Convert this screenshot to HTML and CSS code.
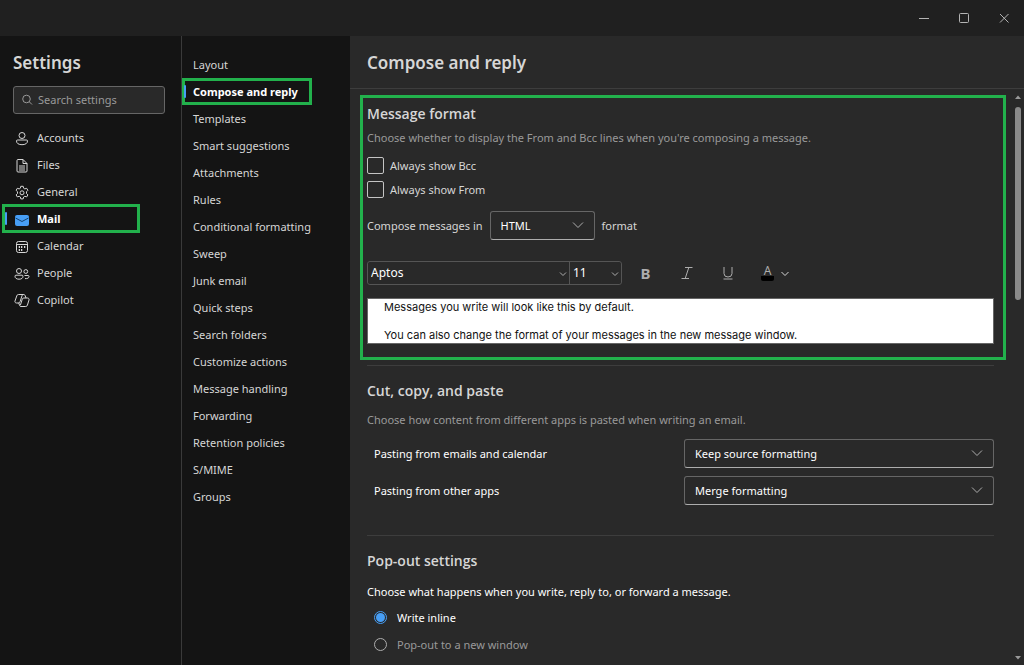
FILE: index.html
```html
<!DOCTYPE html>
<html lang="en">
<head>
  <meta charset="UTF-8">
  <meta name="viewport" content="width=device-width, initial-scale=1.0">
  <title>Settings</title>
  <link rel="stylesheet" href="styles.css">
</head>
<body>
  <header class="titlebar">
    <button type="button" aria-label="Minimize"><svg width="12" height="12" viewBox="0 0 12 12"><path d="M1 6.500h10"/></svg></button>
    <button type="button" aria-label="Maximize"><svg width="12" height="12" viewBox="0 0 12 12"><rect x="1.500" y="1.500" width="9" height="9" rx="1"/></svg></button>
    <button type="button" aria-label="Close"><svg width="12" height="12" viewBox="0 0 12 12"><path d="M2 2l8.500 8.500M10.500 2L2 10.500"/></svg></button>
  </header>

  <div class="window">
    <aside class="sidebar">
      <h1>Settings</h1>
      <div class="search">
        <svg width="12" height="12" viewBox="0 0 12 12"><circle cx="5.500" cy="5" r="3.800"/><path d="M8.300 7.800l2.700 2.700"/></svg>
        <input type="text" placeholder="Search settings" aria-label="Search settings">
      </div>
      <nav class="menu">
        <a href="#">
          <svg width="16" height="16" viewBox="0 0 16 16"><circle cx="8" cy="5.500" r="3"/><path d="M3.500 10h9a1 1 0 0 1 1 1c0 2.500-2.300 3.700-5.500 3.700s-5.500-1.200-5.500-3.700a1 1 0 0 1 1-1z"/></svg>
          Accounts
        </a>
        <a href="#">
          <svg width="16" height="16" viewBox="0 0 16 16"><path d="M3 3.500a1 1 0 0 1 1-1h5l4 4v7.500a1 1 0 0 1-1 1H4a1 1 0 0 1-1-1zM9 2.500v4h4M5 9h6M5 11h6M5 13h6"/></svg>
          Files
        </a>
        <a href="#">
          <svg width="16" height="16" viewBox="0 0 16 16"><circle cx="8" cy="8.800" r="2"/><path d="M6.800 2.300h2.400l.4 1.900 1.200.7 1.900-.6 1.200 2-1.400 1.400v1.800l1.400 1.400-1.200 2-1.900-.6-1.200.7-.4 1.900H6.800l-.4-1.900-1.200-.7-1.900.6-1.200-2 1.400-1.400V7.700L2.100 6.300l1.200-2 1.900.6 1.200-.7z"/></svg>
          General
        </a>
        <a href="#" class="active">
          <svg class="mail" width="16" height="16" viewBox="0 0 16 16"><rect x="1" y="4" width="14" height="11" rx="2"/><path d="M1.500 7L8 10.500 14.500 7"/></svg>
          Mail
        </a>
        <a href="#">
          <svg width="16" height="16" viewBox="0 0 16 16"><rect x="2.500" y="3.500" width="11" height="11" rx="2"/><path d="M2.500 6.500h11"/><path class="dots" d="M7 9h1.300M10 9h1.300M4.700 12H6M7 12h1.300M4.700 9H6"/></svg>
          Calendar
        </a>
        <a href="#">
          <svg width="16" height="16" viewBox="0 0 16 16"><circle cx="5" cy="6" r="2.500"/><circle cx="11.800" cy="6.500" r="1.900"/><path d="M2 10.200h6a1 1 0 0 1 1 1c0 1.900-1.500 3-4 3s-4-1.100-4-3a1 1 0 0 1 1-1zM10.500 10.500h3.500a1 1 0 0 1 1 1c0 1.500-1.500 2.300-4 2.100"/></svg>
          People
        </a>
        <a href="#">
          <svg width="16" height="16" viewBox="0 0 16 16"><path d="M4.500 2.500h5.200a1.500 1.500 0 0 1 1.400 1L12 6h1.500a1.500 1.500 0 0 1 1.500 2l-1.600 5.200a1.800 1.800 0 0 1-1.700 1.300H7a1.500 1.500 0 0 1-1.400-1L4.800 11H2.500A1.500 1.500 0 0 1 1 9l1.800-5.200a1.800 1.800 0 0 1 1.700-1.300z"/><path d="M9.500 2.500a1.500 1.500 0 0 0-1.400 1L6 9.800a1.700 1.700 0 0 1-1.600 1.200M12 6H9.800a1.500 1.500 0 0 0-1.500 1.100l-1.900 6"/></svg>
          Copilot
        </a>
      </nav>
    </aside>

    <nav class="submenu">
      <a href="#">Layout</a>
      <a href="#" class="active">Compose and reply</a>
      <a href="#">Templates</a>
      <a href="#">Smart suggestions</a>
      <a href="#">Attachments</a>
      <a href="#">Rules</a>
      <a href="#">Conditional formatting</a>
      <a href="#">Sweep</a>
      <a href="#">Junk email</a>
      <a href="#">Quick steps</a>
      <a href="#">Search folders</a>
      <a href="#">Customize actions</a>
      <a href="#">Message handling</a>
      <a href="#">Forwarding</a>
      <a href="#">Retention policies</a>
      <a href="#">S/MIME</a>
      <a href="#">Groups</a>
    </nav>

    <main class="content">
      <h2>Compose and reply</h2>
      <div class="scroll-area">
        <div class="sections">
          <section class="message-format">
            <h3>Message format</h3>
            <p class="hint">Choose whether to display the From and Bcc lines when you're composing a message.</p>
            <div class="checks">
              <label><input type="checkbox" name="bcc"> Always show Bcc</label>
              <label><input type="checkbox" name="from"> Always show From</label>
            </div>
            <div class="compose-in">
              <label for="format">Compose messages in</label>
              <div class="select">
                <select id="format"><option>HTML</option><option>Plain text</option></select>
                <svg width="12" height="12" viewBox="0 0 12 12"><path d="M1 3.500l5 5 5-5"/></svg>
              </div>
              <span>format</span>
            </div>
            <div class="toolbar">
              <div class="font-picker">
                <div class="select font-name">
                  <select aria-label="Font"><option>Aptos</option></select>
                  <svg width="8" height="8" viewBox="0 0 8 8"><path d="M1 2.500l3 3 3-3"/></svg>
                </div>
                <div class="select font-size">
                  <select aria-label="Font size"><option>11</option><option>12</option></select>
                  <svg width="8" height="8" viewBox="0 0 8 8"><path d="M1 2.500l3 3 3-3"/></svg>
                </div>
              </div>
              <button type="button" class="bold" aria-label="Bold">B</button>
              <button type="button" aria-label="Italic"><svg width="12" height="14" viewBox="0 0 12 14"><path d="M4 1.500h7.500M.5 12.500H8M7.800 1.500l-3.600 11"/></svg></button>
              <button type="button" aria-label="Underline"><svg width="12" height="14" viewBox="0 0 12 14"><path d="M2 1v6.500a4 3.500 0 0 0 8 0V1M1.500 13h9"/></svg></button>
              <button type="button" class="color" aria-label="Font color">
                <span class="swatch">A</span>
                <svg width="8" height="8" viewBox="0 0 8 8"><path d="M.5 3L4 6.500 7.500 3"/></svg>
              </button>
            </div>
            <div class="preview">
              <p>Messages you write will look like this by default.</p>
              <p>You can also change the format of your messages in the new message window.</p>
            </div>
          </section>

          <section class="paste">
            <h3>Cut, copy, and paste</h3>
            <p class="hint">Choose how content from different apps is pasted when writing an email.</p>
            <div class="row">
              <label for="pasteMail">Pasting from emails and calendar</label>
              <div class="select">
                <select id="pasteMail"><option>Keep source formatting</option></select>
                <svg width="12" height="12" viewBox="0 0 12 12"><path d="M1 3.500l5 5 5-5"/></svg>
              </div>
            </div>
            <div class="row">
              <label for="pasteApps">Pasting from other apps</label>
              <div class="select">
                <select id="pasteApps"><option>Merge formatting</option></select>
                <svg width="12" height="12" viewBox="0 0 12 12"><path d="M1 3.500l5 5 5-5"/></svg>
              </div>
            </div>
          </section>

          <section class="popout">
            <h3>Pop-out settings</h3>
            <p>Choose what happens when you write, reply to, or forward a message.</p>
            <label class="on"><input type="radio" name="popout" checked> Write inline</label>
            <label><input type="radio" name="popout"> Pop-out to a new window</label>
          </section>
        </div>
        <div class="scrollbar">
          <svg width="8" height="6" viewBox="0 0 8 6"><path d="M4 1.500L7 5H1z"/></svg>
          <span class="thumb"></span>
          <svg class="down" width="8" height="6" viewBox="0 0 8 6"><path d="M4 4.500L7 1H1z"/></svg>
        </div>
      </div>
    </main>
  </div>
</body>
</html>
```
FILE: styles.css
```css
* {
  box-sizing: border-box;
}

body {
  margin: 0;
  height: 100vh;
  display: flex;
  flex-direction: column;
  overflow: hidden;
  background: #292929;
  color: #d6d6d6;
  font-family: "Noto Sans", "Open Sans", sans-serif;
  font-size: 11px;
  line-height: 16px;
}

h1, h2, h3, p {
  margin: 0;
}

h1, h2 {
  font-size: 17px;
  line-height: 24px;
  font-weight: 600;
}

h3 {
  font-family: "Open Sans", sans-serif;
  font-size: 14px;
  line-height: 20px;
  font-weight: 600;
}

a {
  color: inherit;
  text-decoration: none;
}

button, input, select {
  margin: 0;
  font: inherit;
  color: inherit;
}

button {
  padding: 0;
  border: none;
  background: none;
}

svg {
  flex: none;
  fill: none;
  stroke: currentColor;
}

/* title bar */
.titlebar {
  flex: none;
  height: 36px;
  display: flex;
  justify-content: flex-end;
  background: #202020;
  color: #b4b4b4;
}

.titlebar button {
  width: 40px;
  display: flex;
  align-items: center;
  justify-content: center;
}

.window {
  flex: 1;
  min-height: 0;
  display: grid;
  grid-template-columns: 182px 168px 1fr;
}

/* left column */
.sidebar {
  background: #141414;
  border-right: 1px solid #3a3a3a;
}

.sidebar h1 {
  margin: 15px 13px 11px;
}

.search {
  display: flex;
  align-items: center;
  gap: 5px;
  height: 28px;
  margin: 0 16px 10px 13px;
  padding: 0 7px;
  border: 1px solid #666;
  border-radius: 3px;
  background: #292929;
  color: #999;
}

.search input {
  flex: 1;
  min-width: 0;
  padding: 0;
  border: none;
  outline: none;
  background: none;
}

.search input::placeholder {
  color: #999;
}

.menu {
  margin: 0 42px 0 3px;
}

.menu a {
  position: relative;
  display: flex;
  align-items: center;
  gap: 7px;
  height: 27px;
  padding-left: 11px;
}

.menu .active,
.submenu .active {
  color: #fff;
  font-weight: 700;
  outline: 3px solid #22b14c;
}

.menu .active {
  outline-offset: -2px;
}

.menu .active::before,
.submenu .active::before {
  content: "";
  position: absolute;
  left: 2px;
  top: 7px;
  width: 2px;
  height: 13px;
  border-radius: 1px;
  background: #479ef5;
}

.mail {
  fill: #479ef5;
  stroke: none;
}

.mail path {
  fill: none;
  stroke: #12406e;
}

.dots {
  stroke-width: 2;
}

/* second column */
.submenu {
  padding-top: 15px;
  background: #141414;
}

.submenu a {
  position: relative;
  display: block;
  height: 27px;
  margin-right: 38px;
  padding-left: 11px;
  line-height: 27px;
  white-space: nowrap;
}

.submenu .active {
  outline-offset: -3px;
}

/* settings page */
.content {
  display: flex;
  flex-direction: column;
  min-width: 0;
  min-height: 0;
}

.content h2 {
  padding: 15px 17px 13px;
  border-bottom: 1px solid #3d3d3d;
}

.scroll-area {
  flex: 1;
  min-height: 0;
  display: flex;
}

.sections {
  flex: 1;
  min-width: 0;
  overflow: hidden;
  padding: 6px 6px 0 10px;
}

.hint {
  color: #999;
}

.message-format {
  padding: 6px 9px 13px 4px;
  border: 3px solid #22b14c;
}

.message-format .hint {
  margin-top: 6px;
}

.checks {
  display: grid;
  gap: 7px;
  margin-top: 11px;
}

.checks label {
  display: flex;
  align-items: center;
  gap: 6px;
}

.checks input {
  appearance: none;
  width: 17px;
  height: 17px;
  border: 1px solid #c4c4c4;
  border-radius: 2px;
}

.checks input:checked {
  background: #479ef5;
}

.compose-in {
  display: flex;
  align-items: center;
  gap: 7px;
  margin-top: 13px;
}

.select {
  position: relative;
  display: flex;
}

.select select {
  appearance: none;
  width: 100%;
  height: 29px;
  padding: 0 32px 0 10px;
  border: 1px solid #666;
  border-bottom-color: #adadad;
  border-radius: 3px;
  background: #292929;
  color: #fff;
}

.select svg {
  position: absolute;
  right: 11px;
  top: 8px;
  color: #adadad;
  pointer-events: none;
}

.compose-in .select {
  width: 105px;
}

.toolbar {
  display: flex;
  align-items: center;
  gap: 16px;
  margin-top: 21px;
  color: #adadad;
}

.font-picker {
  display: flex;
  margin-right: -5px;
  border: 1px solid #555;
  border-radius: 3px;
}

.font-picker select {
  height: 22px;
  padding: 0 14px 0 3px;
  border: none;
  font-size: 12px;
}

.font-picker svg {
  right: 2px;
  top: 8px;
}

.font-name {
  width: 201px;
}

.font-size {
  width: 52px;
  border-left: 1px solid #555;
}

.toolbar button {
  display: flex;
  align-items: center;
  justify-content: center;
  width: 25px;
  height: 24px;
}

.toolbar .bold {
  font-size: 15px;
  font-weight: 700;
}

.toolbar .color {
  width: 30px;
  gap: 7px;
  margin-left: 4px;
  color: #d6d6d6;
}

.swatch {
  width: 13px;
  height: 15px;
  border-bottom: 5px solid #000;
  border-radius: 2px;
  color: #adadad;
  font-size: 12px;
  line-height: 10px;
}

.preview {
  height: 46px;
  margin-top: 13px;
  padding: 1px 16px;
  border: 1px solid #666;
  background: #fff;
  color: #111;
  font-family: Inter, sans-serif;
  font-size: 11px;
  line-height: 14px;
  overflow: hidden;
}

.preview p + p {
  margin-top: 14px;
}

.paste,
.popout {
  margin: 5px 12px 0 7px;
  padding-top: 15px;
  border-top: 1px solid #3d3d3d;
}

.paste .hint {
  margin: 11px 0;
}

.row {
  display: grid;
  grid-template-columns: 1fr 1fr;
  align-items: center;
  margin-bottom: 8px;
  padding-left: 7px;
  color: #fff;
}

.popout {
  margin-top: 30px;
  color: #fff;
}

.popout h3 {
  color: #d6d6d6;
}

.popout p {
  margin: 13px 0 4px;
}

.popout label {
  display: flex;
  align-items: center;
  gap: 10px;
  height: 27px;
  padding-left: 7px;
  color: #999;
}

.popout .on {
  color: #fff;
}

.popout input {
  appearance: none;
  width: 13px;
  height: 13px;
  border: 1px solid #adadad;
  border-radius: 50%;
}

.popout input:checked {
  padding: 1px;
  border-color: #479ef5;
  background: #479ef5 content-box;
}

/* scroll bar */
.scrollbar {
  width: 12px;
  display: flex;
  flex-direction: column;
  align-items: center;
  gap: 7px;
  padding: 5px 0 4px;
}

.scrollbar svg {
  fill: #999;
  stroke: none;
}

.scrollbar .thumb {
  width: 6px;
  height: 34%;
  border-radius: 3px;
  background: #8a8a8a;
}

.scrollbar .down {
  margin-top: auto;
}
```
